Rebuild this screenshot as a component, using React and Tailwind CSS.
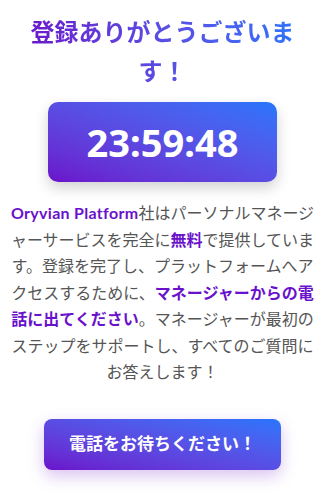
export default function App() {
  return (
    <div
      className="w-[332px] h-[500px] bg-white overflow-hidden"
      style={{ fontFamily: '"Noto Sans", "Noto Sans CJK JP", sans-serif' }}
    >
      <div className="w-[325px] flex flex-col items-center">
        {/* Heading */}
        <h1 className="mt-[12px] w-[282px] text-center text-[24px] leading-[39px] font-bold bg-gradient-to-r from-[#6a11cb] to-[#2575fc] bg-clip-text text-transparent">
          登録ありがとうございます！
        </h1>

        {/* Countdown */}
        <div className="mt-[12px] w-[229px] h-[80px] rounded-[10px] bg-gradient-to-tr from-[#6a11cb] to-[#2575fc] shadow-[0_6px_14px_rgba(0,0,0,0.18)] flex items-center justify-center">
          <span className="text-white text-[38px] font-bold">23:59:48</span>
        </div>

        {/* Message */}
        <p className="mt-[18px] w-[310px] text-center text-[16px] leading-[26.5px] text-[#555]">
          <span
            className="font-bold text-[#6a11cb] tracking-[0.3px]"
            style={{ fontFamily: 'Lato, "Noto Sans CJK JP", sans-serif' }}
          >
            Oryvian Platform
          </span>
          社はパーソナルマネージャーサービスを完全に
          <span className="font-bold text-[#6a11cb]">無料</span>
          で提供しています。登録を完了し、プラットフォームへアクセスするために、
          <span className="font-bold text-[#6a11cb]">
            マネージャーからの電話に出てください
          </span>
          。マネージャーが最初のステップをサポートし、すべてのご質問にお答えします！
        </p>

        {/* CTA */}
        <button className="mt-[33px] w-[237px] h-[51px] rounded-[8px] bg-gradient-to-tr from-[#6a11cb] to-[#2575fc] text-white text-[17px] font-bold shadow-[0_6px_16px_rgba(106,17,203,0.25)]">
          電話をお待ちください！
        </button>
      </div>
    </div>
  );
}
